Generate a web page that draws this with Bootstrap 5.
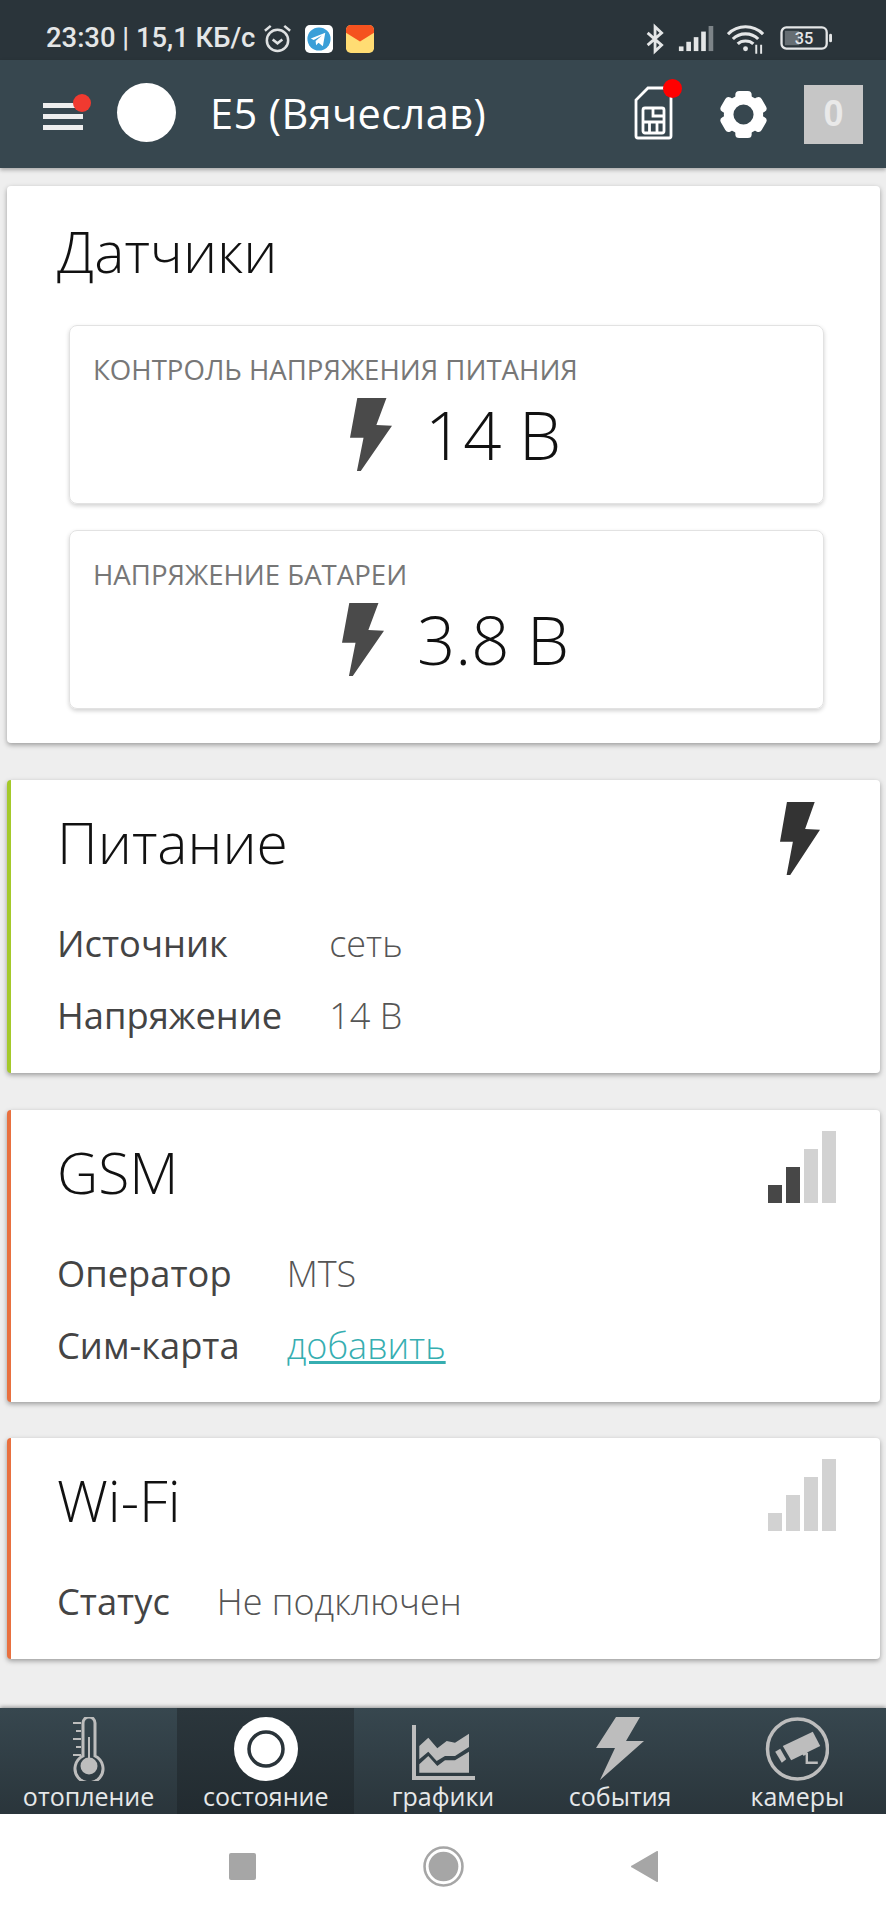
<!DOCTYPE html>
<html lang="ru">
<head>
  <meta charset="UTF-8">
  <meta name="viewport" content="width=device-width, initial-scale=1.0">
  <title>E5 (Вячеслав)</title>
  <link href="https://cdn.jsdelivr.net/npm/bootstrap@5.3.3/dist/css/bootstrap.min.css" rel="stylesheet">
  <style>
    body {
      width: 886px;
      height: 1920px;
      overflow: hidden;
      background: #eee;
      font-family: "Open Sans", "Noto Sans", sans-serif;
    }

    /* статус-бар телефона */
    .phone-status {
      height: 60px;
      background: #2a343a;
      color: #e4e6e7;
      padding: 17px 52px 0 46px;
      font: 500 27.4px/1 Roboto, sans-serif;
    }
    .alarm-ic { margin-left: 7px; }
    .chat-ic { margin-left: 12px; }
    .mail-ic { margin-left: 13px; }
    .signal-ic { margin-left: 11px; }
    .wifi-ic { margin-left: 10px; }
    .batt-ic { margin-left: 14px; }

    /* шапка */
    .app-head {
      height: 108px;
      background: #37474f;
      color: #fff;
      padding: 0 23px 0 43px;
      box-shadow: 0 2px 4px rgba(0, 0, 0, .3);
    }
    .burger { width: 40px; height: 28px; margin-top: 6px; }
    .burger span { display: block; height: 5px; background: #eee; margin-bottom: 6px; }
    .red-dot { position: absolute; background: #f00; border-radius: 50%; }
    .burger .red-dot { width: 18px; height: 18px; top: -9px; right: -8px; background: #f03a30; }
    .avatar { width: 59px; height: 59px; background: #fff; border-radius: 50%; margin: -4px 0 0 34px; }
    .head-title { font-size: 41.5px; margin-left: 34px; font-weight: 400; letter-spacing: .4px; line-height: 1; }
    .sim-ic { width: 39px; height: 54px; margin-right: 47px; margin-top: -2px; }
    .sim-ic .red-dot { width: 19px; height: 19px; top: -7px; right: -9px; }
    .zero-box {
      width: 59px; height: 59px; background: #c6c6c6; color: #e9e9e9; margin-left: 37px;
      font: 700 36px "Liberation Sans", sans-serif;
    }

    /* карточки */
    .panel {
      margin: 0 6px 37px 7px;
      background: #fff;
      border-radius: 4px;
      box-shadow: 0 2px 5px rgba(0, 0, 0, .35);
      padding: 0 38px 0 46px;
    }
    .panel-sensors { height: 557px; margin-top: 18px; padding: 37px 38px 0 50px; }
    .panel-green { border-left: 4px solid #a4c92a; height: 293px; }
    .panel-orange { border-left: 4px solid #e8703f; height: 292px; margin-bottom: 36px; }
    .panel-short { height: 221px; margin-bottom: 0; }
    .panel-title {
      font-size: 57px; font-weight: 300; line-height: 1; color: #111; margin: 0;
    }
    .sensors-title { margin-bottom: 45px; }
    .panel-top { padding-top: 34px; height: 138px; }
    .rows {
      display: grid;
      grid-template-columns: auto 1fr;
      column-gap: 47px;
      row-gap: 21px;
      line-height: 51px;
      margin: 0;
    }
    .rows dt { font-size: 36.300px; font-weight: 400; color: #444; }
    .rows dd { font-size: 36px; font-weight: 300; color: #555; margin: 0; }
    .rows a { color: #36aeb1; }

    .sensor {
      margin: 0 18px 26px 12px;
      height: 179px;
      border: 1px solid #e2e2e2;
      border-radius: 8px;
      box-shadow: 0 2px 4px rgba(0, 0, 0, .18);
      padding: 26px 23px;
    }
    .sensor-name { font-size: 27.600px; line-height: 34px; color: #777; font-weight: 400; }
    .sensor-value { font-size: 67px; font-weight: 300; color: #111; line-height: 1; gap: 33px; margin-top: 12px; padding-left: 18px; }
    .bolt-small { width: 42px; height: 73px; fill: #4a4a4a; }
    .bolt-big { width: 40px; height: 73px; fill: #333; margin: -12px 22px 0 0; }

    .bars { gap: 4px; height: 73px; margin-top: -14px; margin-right: 6px; }
    .bars i { display: block; width: 14px; background: #d2d2d2; }
    .bars i:nth-child(1) { height: 18px; }
    .bars i:nth-child(2) { height: 36px; }
    .bars i:nth-child(3) { height: 54px; }
    .bars i:nth-child(4) { height: 72px; }
    .bars .on { background: #474747; }

    /* нижнее меню */
    .tabs {
      height: 106px;
      margin-top: 49px;
      background: linear-gradient(#37474f, #2a353b);
      box-shadow: 0 -1px 4px rgba(0, 0, 0, .4);
    }
    .tab {
      width: 20%;
      color: #e6e8e9;
      font-size: 25px;
      line-height: 1;
      padding-top: 9px;
    }
    .tab svg { width: 64px; height: 64px; display: block; margin-bottom: 3px; }
    .tab-active { background: linear-gradient(#2b363c, #222b30); }
    .phone-nav { height: 108px; background: #fff; gap: 167px; padding-bottom: 3px; }
  </style>
</head>

<body>
  <!-- Статус-бар -->
  <div class="phone-status d-flex align-items-center justify-content-between">
    <div class="d-flex align-items-center">
      <span>23:30 | 15,1 КБ/с</span>
      <svg class="alarm-ic" width="31" height="31" viewBox="0 0 32 32" fill="none" stroke="#dfe1e2" stroke-width="2.600">
        <circle cx="16" cy="18" r="11"/>
        <path d="M11 17l5 4 5-4M3 8l6-5M29 8l-6-5"/>
      </svg>
      <svg class="chat-ic" width="28" height="28" viewBox="0 0 29 29">
        <rect width="29" height="29" rx="5" fill="#fff"/>
        <circle cx="14.500" cy="14.500" r="12" fill="#3a9fd8"/>
        <path d="M6 14l15-6-2.500 14-4.500-3.500-2.500 2.500-.5-4.500 6.500-5.500-8.500 4.500z" fill="#fff"/>
      </svg>
      <svg class="mail-ic" width="28" height="28" viewBox="0 0 29 29">
        <rect width="29" height="29" rx="5" fill="#ffdc73"/>
        <path d="M0 5a5 5 0 0 1 5-5h19a5 5 0 0 1 5 5v3l-14.500 9L0 8z" fill="#f5521f"/>
      </svg>
    </div>
    <div class="d-flex align-items-center">
      <svg width="21" height="32" viewBox="0 0 24 32" fill="none" stroke="#e4e6e7" stroke-width="3.200">
        <path d="M3 9l16 14-7.500 7V2l7.500 7L3 23"/>
      </svg>
      <svg class="signal-ic" width="40" height="26" viewBox="0 0 41 28">
        <rect x="1" y="22" width="5" height="5" fill="#e4e6e7"/>
        <rect x="9" y="17" width="5" height="10" fill="#e4e6e7"/>
        <rect x="17" y="12" width="5" height="15" fill="#e4e6e7"/>
        <rect x="25" y="6" width="5" height="21" fill="#e4e6e7"/>
        <rect x="33" y="0" width="5" height="27" fill="#7d8488"/>
      </svg>
      <svg class="wifi-ic" width="39" height="30" viewBox="0 0 40 30" fill="none" stroke="#e4e6e7" stroke-width="3.200">
        <path d="M1 10c10-10 26-10 36 0M6 15c7-7 19-7 26 0M11 20c4-4 12-4 16 0"/>
        <circle cx="19" cy="25" r="2.500" fill="#e4e6e7" stroke="none"/>
        <path d="M30 21v9M35 21v9" stroke-width="2"/>
      </svg>
      <svg class="batt-ic" width="54" height="25" viewBox="0 0 56 26">
        <rect x="1.500" y="1.500" width="47" height="22" rx="5" fill="none" stroke="#e4e6e7" stroke-width="2.400"/>
        <rect x="5" y="5" width="15" height="15" fill="#666e73"/>
        <text x="25" y="19" text-anchor="middle" font-family="Roboto, sans-serif" font-size="17" fill="#e4e6e7">35</text>
        <rect x="51" y="8" width="3" height="9" rx="1.500" fill="#e4e6e7"/>
      </svg>
    </div>
  </div>

  <!-- Шапка -->
  <div class="app-head d-flex align-items-center position-relative">
    <div class="burger position-relative">
      <span></span><span></span><span></span>
      <i class="red-dot"></i>
    </div>
    <div class="avatar"></div>
    <div class="head-title">E5 (Вячеслав)</div>
    <div class="ms-auto d-flex align-items-center">
      <div class="sim-ic position-relative">
        <svg width="39" height="54" viewBox="0 0 39 54" fill="none" stroke="#fff" stroke-width="2.800">
          <path d="M14 2h21a2 2 0 0 1 2 2v46a2 2 0 0 1-2 2H4a2 2 0 0 1-2-2V14z"/>
          <rect x="9" y="22" width="21" height="25" rx="2"/>
          <path d="M9 36h21M15.500 36v11M23 36v11M19 22v8h11"/>
        </svg>
        <i class="red-dot"></i>
      </div>
      <svg width="47" height="49" viewBox="0 0 49 49" fill="#fff">
        <circle cx="24.500" cy="24.500" r="15.500" fill="none" stroke="#fff" stroke-width="10"/>
        <g id="gear-teeth">
          <rect x="16" y="0" width="17" height="11" rx="4"/>
          <rect x="16" y="38" width="17" height="11" rx="4"/>
        </g>
        <use href="#gear-teeth" transform="rotate(60 24.500 24.500)"/>
        <use href="#gear-teeth" transform="rotate(120 24.500 24.500)"/>
      </svg>
      <div class="zero-box d-flex align-items-center justify-content-center">0</div>
    </div>
  </div>

  <!-- Датчики -->
  <div class="panel panel-sensors">
    <h2 class="panel-title sensors-title">Датчики</h2>
    <div class="sensor">
      <div class="sensor-name">КОНТРОЛЬ НАПРЯЖЕНИЯ ПИТАНИЯ</div>
      <div class="sensor-value d-flex align-items-center justify-content-center">
        <svg class="bolt-small" viewBox="0 0 121 218" preserveAspectRatio="none"><path d="M21 0H105L76 81L121 83L31 218H20L39 119H0Z"/></svg>
        <span>14 В</span>
      </div>
    </div>
    <div class="sensor">
      <div class="sensor-name">НАПРЯЖЕНИЕ БАТАРЕИ</div>
      <div class="sensor-value d-flex align-items-center justify-content-center">
        <svg class="bolt-small" viewBox="0 0 121 218" preserveAspectRatio="none"><path d="M21 0H105L76 81L121 83L31 218H20L39 119H0Z"/></svg>
        <span>3.8 В</span>
      </div>
    </div>
  </div>

  <!-- Питание -->
  <div class="panel panel-green">
    <div class="panel-top d-flex justify-content-between align-items-start">
      <h2 class="panel-title">Питание</h2>
      <svg class="bolt-big" viewBox="0 0 121 218" preserveAspectRatio="none"><path d="M21 0H105L76 81L121 83L31 218H20L39 119H0Z"/></svg>
    </div>
    <dl class="rows">
      <dt>Источник</dt><dd>сеть</dd>
      <dt>Напряжение</dt><dd>14 В</dd>
    </dl>
  </div>

  <!-- GSM -->
  <div class="panel panel-orange">
    <div class="panel-top d-flex justify-content-between align-items-start">
      <h2 class="panel-title">GSM</h2>
      <div class="bars d-flex align-items-end"><i class="on"></i><i class="on"></i><i></i><i></i></div>
    </div>
    <dl class="rows">
      <dt>Оператор</dt><dd>MTS</dd>
      <dt>Сим-карта</dt><dd><a href="#">добавить</a></dd>
    </dl>
  </div>

  <!-- Wi-Fi -->
  <div class="panel panel-orange panel-short">
    <div class="panel-top d-flex justify-content-between align-items-start">
      <h2 class="panel-title">Wi-Fi</h2>
      <div class="bars d-flex align-items-end"><i></i><i></i><i></i><i></i></div>
    </div>
    <dl class="rows">
      <dt>Статус</dt><dd>Не подключен</dd>
    </dl>
  </div>

  <!-- Нижнее меню -->
  <nav class="tabs d-flex">
    <div class="tab d-flex flex-column align-items-center">
      <svg viewBox="0 0 64 64" fill="none" stroke="#bdbdbd">
        <path stroke-width="3" d="M26 39V6a6 6 0 0 1 12 0v33a14 14 0 1 1-12 0z"/>
        <circle cx="32" cy="49" r="8.500" fill="#bdbdbd" stroke="none"/>
        <path stroke-width="2" d="M32 20v24M16 6h8M19 14h5M16 22h8M19 30h5M16 38h8"/>
      </svg>
      отопление
    </div>
    <div class="tab tab-active d-flex flex-column align-items-center">
      <svg viewBox="0 0 64 64">
        <circle cx="32" cy="32" r="32" fill="#fff"/>
        <circle cx="32" cy="32" r="17" fill="none" stroke="#2a343a" stroke-width="3.500"/>
      </svg>
      состояние
    </div>
    <div class="tab d-flex flex-column align-items-center">
      <svg viewBox="0 0 64 64" fill="#bdbdbd">
        <path d="M1 8h4v51h59v4H1z"/>
        <path d="M8.300 29L17.300 20.700 26.300 31.300 35.700 24 44 25.700 58 16.700V30L44 39H34L25.700 44 17.300 34.700 8.300 42.300Z"/>
        <path d="M8.300 47.300L17.300 39 26.300 49 34 43.300H44L58 34.700V55.700H8.300Z"/>
      </svg>
      графики
    </div>
    <div class="tab d-flex flex-column align-items-center">
      <svg viewBox="0 0 64 64" fill="#bdbdbd">
        <path d="M28 0H52L38 24H56L12 63L27 31H8Z"/>
      </svg>
      события
    </div>
    <div class="tab d-flex flex-column align-items-center">
      <svg viewBox="0 0 64 64" fill="#bdbdbd">
        <circle cx="32.500" cy="32" r="30" fill="none" stroke="#bdbdbd" stroke-width="3.500"/>
        <path d="M17.800 29L47.800 14.700 55.200 29 26.200 43.300z"/>
        <path d="M10.200 34.700L15.200 31.700 21.200 42.300 16.800 45.700z"/>
        <path d="M41.800 36v9.700H52.800M38 38l4-3" fill="none" stroke="#bdbdbd" stroke-width="2.400"/>
      </svg>
      камеры
    </div>
  </nav>

  <!-- Кнопки телефона -->
  <div class="phone-nav d-flex align-items-center justify-content-center">
    <svg width="27" height="27" viewBox="0 0 27 27"><rect width="27" height="27" rx="2" fill="#a6a6a6"/></svg>
    <svg width="41" height="41" viewBox="0 0 40 40">
      <circle cx="20" cy="20" r="18.500" fill="none" stroke="#a6a6a6" stroke-width="2.500"/>
      <circle cx="20" cy="20" r="14.500" fill="#a6a6a6"/>
    </svg>
    <svg width="27" height="31" viewBox="0 0 27 31"><path d="M27 1v29a1 1 0 0 1-1.500.8L1 16.500a1 1 0 0 1 0-2L25.500.2A1 1 0 0 1 27 1z" fill="#a6a6a6"/></svg>
  </div>

  <script src="https://cdn.jsdelivr.net/npm/bootstrap@5.3.3/dist/js/bootstrap.bundle.min.js"></script>
</body>
</html>
